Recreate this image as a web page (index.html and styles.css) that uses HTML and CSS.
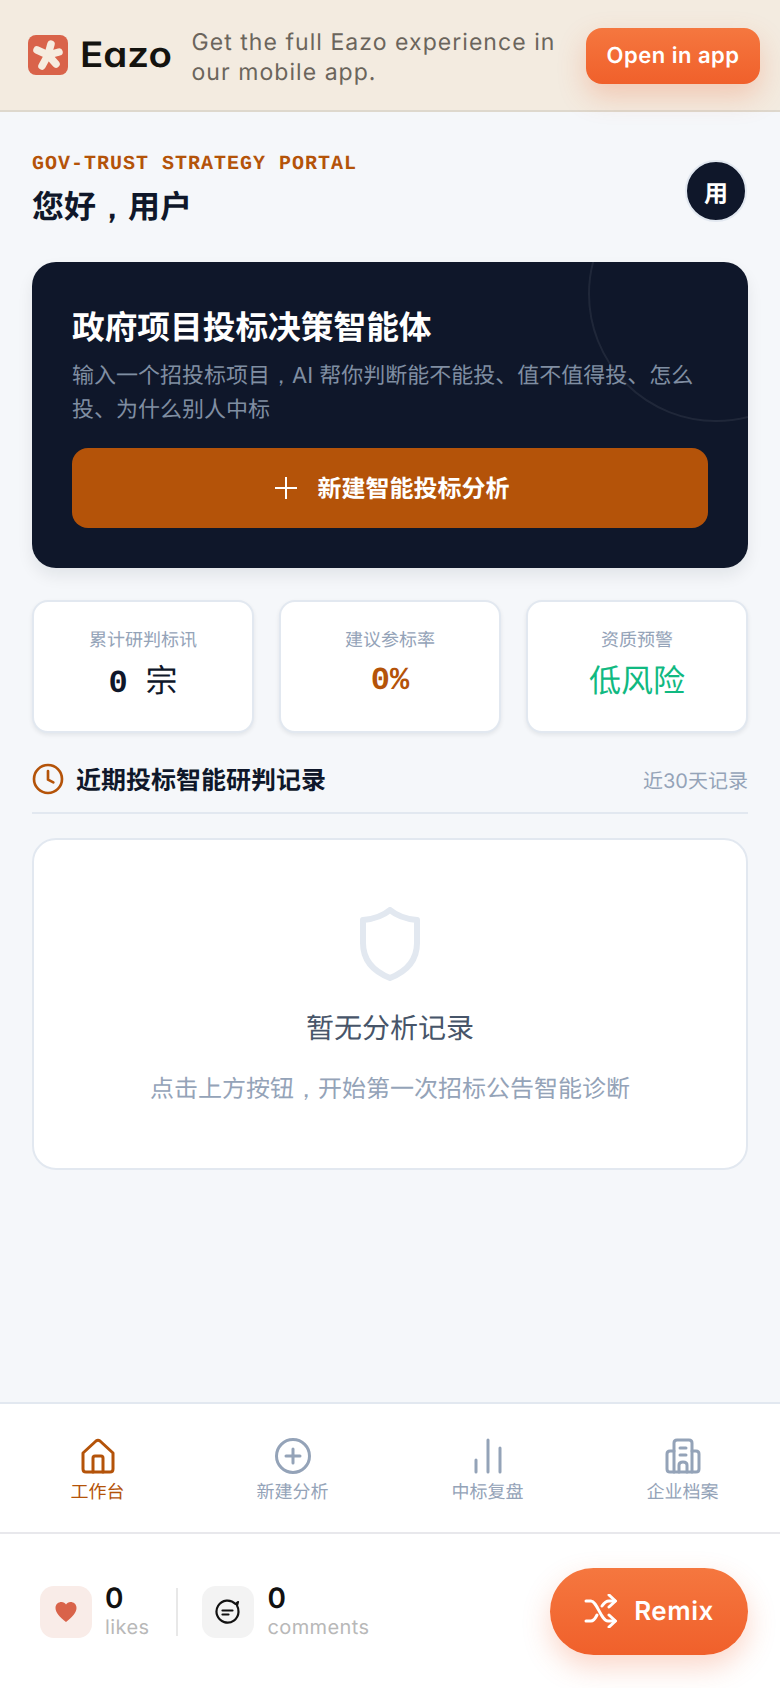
FILE: index.html
```html
<!DOCTYPE html>
<html lang="zh">
<head>
  <meta charset="UTF-8" />
  <meta name="viewport" content="width=device-width, initial-scale=1.0"/>
  <title>Gov-Trust Strategy Portal</title>
  <link rel="stylesheet" href="styles.css">
</head>
<body>
  <header class="banner">
    <div class="brand">
      <svg class="brand-mark" viewBox="0 0 40 40">
        <rect width="40" height="40" rx="8" fill="#d9634a"/>
        <g stroke="#f6ecdf" stroke-width="7.5" stroke-linecap="round">
          <path d="M20 20 L23 9"/>
          <path d="M20 20 L31 17"/>
          <path d="M20 20 L28 29"/>
          <path d="M20 20 L14 31"/>
          <path d="M20 20 L9 15"/>
        </g>
      </svg>
      <span class="brand-name">Eazo</span>
    </div>
    <p class="banner-text">Get the full Eazo experience in our mobile app.</p>
    <a class="open-btn" href="#">Open in app</a>
  </header>

  <main class="content">
    <section class="top-row">
      <div>
        <div class="eyebrow">GOV-TRUST STRATEGY PORTAL</div>
        <h1 class="hello">您好<span class="comma">，</span>用户</h1>
      </div>
      <div class="avatar">用</div>
    </section>

    <section class="hero">
      <div class="hero-ring"></div>
      <h2 class="hero-title">政府项目投标决策智能体</h2>
      <p class="hero-sub">输入一个招投标项目<span class="comma">，</span>AI 帮你判断能不能投、值不值得投、怎么<br>投、为什么别人中标</p>
      <a class="hero-btn" href="#">
        <svg class="hero-plus" viewBox="0 0 24 24" fill="none" stroke="#fff" stroke-width="2"><path d="M12 1v22M1 12h22"/></svg>
        <span>新建智能投标分析</span>
      </a>
    </section>

    <section class="stats">
      <div class="stat">
        <div class="stat-label">累计研判标讯</div>
        <div class="stat-value"><span class="mono stat-num">0</span> 宗</div>
      </div>
      <div class="stat">
        <div class="stat-label">建议参标率</div>
        <div class="stat-value mono orange">0%</div>
      </div>
      <div class="stat">
        <div class="stat-label">资质预警</div>
        <div class="stat-value green">低风险</div>
      </div>
    </section>

    <section class="records-head">
      <div class="records-title">
        <svg class="clock" viewBox="0 0 24 24" fill="none" stroke="#b45309" stroke-width="2" stroke-linecap="round" stroke-linejoin="round"><circle cx="12" cy="12" r="10.5"/><path d="M12 6v6.5l4 2"/></svg>
        <span>近期投标智能研判记录</span>
      </div>
      <span class="records-range">近30天记录</span>
    </section>

    <section class="empty">
      <svg class="shield" viewBox="0 0 60 74" fill="none" stroke="#e2e8f0" stroke-width="6" stroke-linejoin="round"><path d="M30 3 C37 9 46 12 57 13 V36 C57 54 45 65 30 71 C15 65 3 54 3 36 V13 C14 12 23 9 30 3 Z"/></svg>
      <div class="empty-title">暂无分析记录</div>
      <div class="empty-sub">点击上方按钮<span class="comma">，</span>开始第一次招标公告智能诊断</div>
    </section>
  </main>

  <nav class="tabs">
    <a class="tab active" href="#">
      <svg viewBox="0 0 36 36" fill="none" stroke="currentColor" stroke-width="3" stroke-linejoin="round" stroke-linecap="round"><path d="M3 15 L16 3 Q18 1.500 20 3 L33 15 V31 Q33 34 30 34 H6 Q3 34 3 31 Z"/><path d="M13 34 V20 Q13 18 15 18 H21 Q23 18 23 20 V34"/></svg>
      <span>工作台</span>
    </a>
    <a class="tab" href="#">
      <svg viewBox="0 0 36 36" fill="none" stroke="currentColor" stroke-width="3" stroke-linecap="round"><circle cx="18" cy="18" r="16.500"/><path d="M18 11v14M11 18h14"/></svg>
      <span>新建分析</span>
    </a>
    <a class="tab" href="#">
      <svg viewBox="0 0 36 36" fill="none" stroke="currentColor" stroke-width="3" stroke-linecap="round"><path d="M6 34V22M18 34V2M30 34V10"/></svg>
      <span>中标复盘</span>
    </a>
    <a class="tab" href="#">
      <svg viewBox="0 0 36 36" fill="none" stroke="currentColor" stroke-width="3" stroke-linejoin="round" stroke-linecap="round"><path d="M9 34 V5 Q9 2 12 2 H24 Q27 2 27 5 V34"/><path d="M9 13 H5 Q2 13 2 16 V31 Q2 34 5 34 H31 Q34 34 34 31 V16 Q34 13 31 13 H27"/><path d="M15 10h6M15 17h6"/><path d="M14 34 V27 Q14 24 18 24 Q22 24 22 27 V34"/></svg>
      <span>企业档案</span>
    </a>
  </nav>

  <footer class="social">
    <div class="counts">
      <div class="count">
        <div class="count-icon like">
          <svg viewBox="0 0 24 24" width="24" height="24"><path d="M12 22 C6 17 1.500 13 1.500 8 C1.500 4 4.500 2 7.500 2 C9.500 2 11 3 12 4.500 C13 3 14.500 2 16.500 2 C19.500 2 22.500 4 22.500 8 C22.500 13 18 17 12 22 Z" fill="#d9634a"/></svg>
        </div>
        <div class="count-text"><div class="count-num">0</div><div class="count-label">likes</div></div>
      </div>
      <div class="count-sep"></div>
      <div class="count">
        <div class="count-icon">
          <svg viewBox="0 0 26 26" width="26" height="26" fill="none" stroke="#111" stroke-width="2.200" stroke-linecap="round"><path d="M23 3 L20.500 5 A11 11 0 1 0 23.500 13 Q23.500 9 22 6.500 Z" stroke-linejoin="round"/><path d="M7.500 11.500h10M7.500 15.500h6"/></svg>
        </div>
        <div class="count-text"><div class="count-num">0</div><div class="count-label">comments</div></div>
      </div>
    </div>
    <a class="remix" href="#">
      <svg viewBox="0 0 34 34" width="34" height="34" fill="none" stroke="#fff" stroke-width="3" stroke-linecap="round" stroke-linejoin="round"><path d="M2 7 H7 C13 7 17 27 24 27 H31"/><path d="M2 27 H7 C9.500 27 11.500 24 13 21"/><path d="M18 12 C20 9 21.500 7 25 7 H31"/><path d="M25 1 L31.500 7 L25 13"/><path d="M25 21 L31.500 27 L25 33"/></svg>
      <span>Remix</span>
    </a>
  </footer>
</body>
</html>
```
FILE: styles.css
```css
* {
  box-sizing: border-box;
  margin: 0;
  padding: 0;
}

html, body {
  height: 100%;
}

body {
  font-family: Inter, 'Noto Sans CJK SC', sans-serif;
  text-rendering: geometricPrecision;
  background: #f5f7fa;
  color: #0f172a;
  display: flex;
  flex-direction: column;
  height: 1688px;
  overflow: hidden;
}

a {
  text-decoration: none;
}

.comma {
  font-family: sans-serif;
}

.mono {
  font-family: 'Liberation Mono', 'Noto Sans CJK SC', monospace;
  font-weight: 700;
}

.banner {
  height: 112px;
  flex: none;
  display: flex;
  align-items: center;
  padding: 0 20px 0 28px;
  background: #f3ebe0;
  border-bottom: 2px solid #ded8cd;
}

.brand {
  display: flex;
  align-items: center;
  gap: 12px;
  margin-right: 20px;
}

.brand-mark {
  width: 40px;
  height: 40px;
}

.brand-name {
  font-size: 35px;
  font-weight: 600;
  font-feature-settings: "cv11";
  color: #14130f;
  transform: scaleX(1.1);
  transform-origin: left;
  margin-right: 8px;
}

.banner-text {
  flex: 1;
  font-size: 23px;
  line-height: 30px;
  letter-spacing: 1.05px;
  color: #6b655c;
  margin-top: 4px;
}

.open-btn {
  width: 174px;
  height: 56px;
  margin-top: 2px;
  border-radius: 16px;
  display: flex;
  align-items: center;
  justify-content: center;
  font-size: 22px;
  font-weight: 600;
  letter-spacing: .5px;
  color: #fff;
  background: linear-gradient(to bottom, #f5773f, #f0602b);
  box-shadow: 0 12px 28px rgba(240, 96, 43, .25);
}

.content {
  flex: 1;
  padding: 41px 32px 0;
  min-height: 0;
}

.top-row {
  display: flex;
  justify-content: space-between;
  align-items: center;
  margin-bottom: 33px;
}

.eyebrow {
  font-family: 'Liberation Mono', monospace;
  font-weight: 700;
  font-size: 20px;
  letter-spacing: 1px;
  color: #b45309;
}

.hello {
  font-size: 32px;
  font-weight: 700;
  line-height: 44px;
  margin-top: 9px;
}

.avatar {
  width: 62px;
  height: 62px;
  margin-right: 1px;
  border-radius: 50%;
  border: 2px solid #e2e8f0;
  background: #0f172a;
  color: #fff;
  font-size: 24px;
  font-weight: 700;
  display: flex;
  align-items: center;
  justify-content: center;
}

.hero {
  position: relative;
  overflow: hidden;
  height: 306px;
  padding: 42px 40px 0;
  border-radius: 24px;
  background: #0f172a;
  box-shadow: 0 8px 16px rgba(15, 23, 42, .08);
}

.hero-ring {
  position: absolute;
  top: -96px;
  right: -96px;
  width: 256px;
  height: 256px;
  border-radius: 50%;
  border: 2px solid rgba(255, 255, 255, .07);
}

.hero-title {
  font-size: 32.7px;
  font-weight: 700;
  line-height: 46px;
  color: #fff;
}

.hero-sub {
  margin-top: 9px;
  font-size: 22px;
  line-height: 34px;
  color: #94a3b8;
  opacity: .85;
}

.hero-btn {
  margin-top: 21px;
  height: 80px;
  padding-left: 3px;
  border-radius: 16px;
  background: #b45309;
  color: #fff;
  font-size: 24px;
  font-weight: 700;
  display: flex;
  align-items: center;
  justify-content: center;
  gap: 20px;
}

.hero-btn span {
  margin-top: -3px;
}

.hero-plus {
  width: 24px;
  height: 24px;
}

.stats {
  display: grid;
  grid-template-columns: repeat(3, 1fr);
  gap: 25px;
  margin-top: 32px;
}

.stat {
  height: 133px;
  border-radius: 16px;
  border: 2px solid #e2e8f0;
  background: #fff;
  box-shadow: 0 2px 4px rgba(15, 23, 42, .08);
  text-align: center;
  padding-top: 26px;
}

.stat-label {
  font-size: 18px;
  line-height: 26px;
  color: #94a3b8;
}

.stat-value {
  font-size: 32px;
  line-height: 44px;
  margin-top: 5px;
}

.stat-num {
  margin-right: 9px;
}

.orange {
  color: #b45309;
}

.green {
  color: #10b981;
}

.records-head {
  display: flex;
  justify-content: space-between;
  align-items: center;
  margin-top: 28px;
  padding-bottom: 15px;
  border-bottom: 2px solid #e2e8f0;
}

.records-title {
  display: flex;
  align-items: center;
  gap: 12px;
  font-size: 25px;
  font-weight: 700;
}

.clock {
  width: 32px;
  height: 32px;
}

.records-range {
  font-size: 20px;
  color: #94a3b8;
}

.empty {
  margin-top: 24px;
  height: 332px;
  border-radius: 24px;
  border: 2px solid #e2e8f0;
  background: #fff;
  display: flex;
  flex-direction: column;
  align-items: center;
  padding-top: 67px;
}

.shield {
  width: 60px;
  height: 74px;
}

.empty-title {
  margin-top: 27px;
  font-size: 28px;
  line-height: 40px;
  color: #475569;
}

.empty-sub {
  margin-top: 23px;
  font-size: 24px;
  line-height: 36px;
  color: #94a3b8;
}

.tabs {
  flex: none;
  height: 132px;
  display: grid;
  grid-template-columns: repeat(4, 1fr);
  background: #fff;
  border-top: 2px solid #e2e8f0;
  border-bottom: 2px solid #e8e8ec;
  padding-top: 34px;
}

.tab {
  display: flex;
  flex-direction: column;
  align-items: center;
  gap: 6px;
  color: #94a3b8;
  font-size: 18px;
  line-height: 26px;
}

.tab svg {
  width: 36px;
  height: 36px;
}

.tab.active {
  color: #b45309;
}

.social {
  flex: none;
  height: 154px;
  background: #fff;
  display: flex;
  align-items: center;
  justify-content: space-between;
  padding: 0 32px 0 40px;
}

.counts {
  display: flex;
  align-items: center;
  margin-top: 2px;
}

.count {
  display: flex;
  align-items: center;
  gap: 13px;
}

.count-icon {
  width: 52px;
  height: 52px;
  border-radius: 14px;
  background: #f3f3f3;
  display: flex;
  align-items: center;
  justify-content: center;
}

.count-icon.like {
  background: #f9ece8;
}

.count-text {
  padding-bottom: 2px;
}

.count-num {
  font-size: 28px;
  font-weight: 600;
  line-height: 32px;
  color: #111;
}

.count-label {
  font-size: 20px;
  line-height: 26px;
  letter-spacing: .4px;
  color: #b8b8b8;
}

.count-sep {
  width: 2px;
  height: 48px;
  margin: 0 24px 0 27px;
  background: #e8e8e8;
}

.remix {
  width: 198px;
  height: 87px;
  border-radius: 44px;
  display: flex;
  align-items: center;
  justify-content: center;
  gap: 16px;
  font-size: 26px;
  font-weight: 600;
  letter-spacing: .5px;
  color: #fff;
  background: linear-gradient(to bottom, #f5773f, #f0602b);
  box-shadow: 0 12px 28px rgba(240, 96, 43, .25);
}
```
